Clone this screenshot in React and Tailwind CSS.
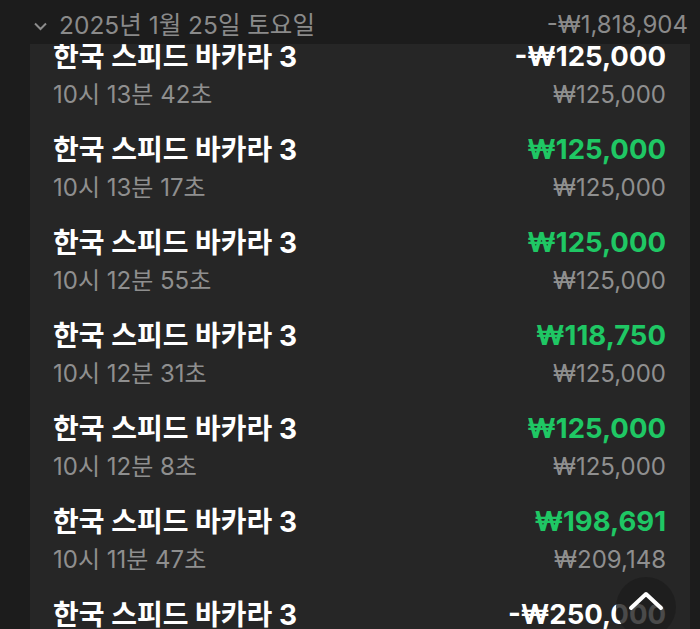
import React from "react";

const rows = [
  { time: "10시 13분 42초", amount: "-₩125,000", bet: "₩125,000", win: false },
  { time: "10시 13분 17초", amount: "₩125,000", bet: "₩125,000", win: true },
  { time: "10시 12분 55초", amount: "₩125,000", bet: "₩125,000", win: true },
  { time: "10시 12분 31초", amount: "₩118,750", bet: "₩125,000", win: true },
  { time: "10시 12분 8초", amount: "₩125,000", bet: "₩125,000", win: true },
  { time: "10시 11분 47초", amount: "₩198,691", bet: "₩209,148", win: true },
  { time: "10시 11분 20초", amount: "-₩250,000", bet: "₩250,000", win: false },
];

export default function App() {
  return (
    <div
      className="relative w-[700px] h-[629px] overflow-hidden bg-[#1c1c1c]"
      style={{ fontFamily: 'Inter, "Noto Sans CJK KR", sans-serif' }}
    >
      <div className="flex items-center h-[44px] pt-[6px] pl-[33px] pr-[12px]">
        <svg width="15" height="10" viewBox="0 0 15 10" className="mr-[11px] mt-[2px]">
          <path d="M2 2.5 L7.5 8 L13 2.5" fill="none" stroke="#8c8c8c" strokeWidth="2" />
        </svg>
        <span className="text-[24.5px] leading-[30px] text-[#8a8a8a]">2025년 1월 25일 토요일</span>
        <span className="ml-auto text-[24px] leading-[30px] text-[#8a8a8a]">-₩1,818,904</span>
      </div>
      <div className="ml-[30px] w-[660px] h-[585px] overflow-hidden bg-[#262626]">
        <div className="-mt-[16px]">
          {rows.map((r, i) => (
            <div key={i} className="pl-[23px] pr-[24px] pt-[11px] pb-[7px]">
              <div className="flex items-center h-[36px]">
                <span className="text-[28px] font-bold text-white">한국 스피드 바카라 3</span>
                <span
                  className={
                    "ml-auto text-[27.5px] font-bold " +
                    (r.win ? "text-[#1fc764]" : "text-white")
                  }
                >
                  {r.amount}
                </span>
              </div>
              <div className="flex items-center h-[39px]">
                <span className="text-[24px] text-[#8f8f8f]">{r.time}</span>
                <span className="ml-auto text-[24px] text-[#8f8f8f]">{r.bet}</span>
              </div>
            </div>
          ))}
        </div>
      </div>
      <div className="absolute left-[616px] top-[577px] w-[60px] h-[60px] rounded-full bg-[#1d1d1d]/80 flex items-center justify-center">
        <svg width="36" height="24" viewBox="0 0 36 24" className="-mt-[12px]">
          <path d="M3 19 L18 5 L33 19" fill="none" stroke="white" strokeWidth="4" strokeLinecap="round" strokeLinejoin="round" />
        </svg>
      </div>
    </div>
  );
}
